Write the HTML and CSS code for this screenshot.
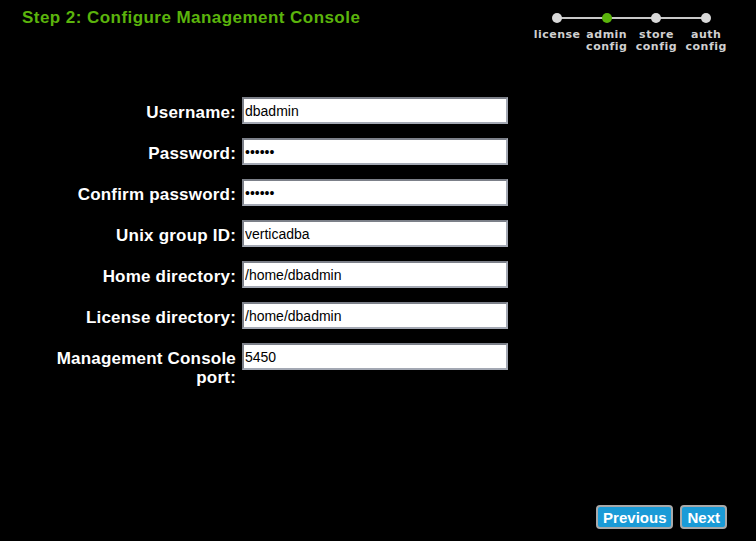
FILE: index.html
```
<html>
<head>
    <link rel="stylesheet" href="styles.css">
</head>
<body>
    <div class="page">
        <div class="top">
            <h1 class="title">Step 2: Configure Management Console</h1>
            <div class="steps">
                <div class="step">
                    <span class="dot"></span>
                    <span class="step-name">license</span>
                </div>
                <div class="step">
                    <span class="dot on"></span>
                    <span class="step-name">admin<br>config</span>
                </div>
                <div class="step">
                    <span class="dot"></span>
                    <span class="step-name">store<br>config</span>
                </div>
                <div class="step">
                    <span class="dot"></span>
                    <span class="step-name">auth<br>config</span>
                </div>
            </div>
        </div>

        <form class="fields" autocomplete="off" onsubmit="event.preventDefault();">
            <label for="user">Username:</label>
            <input type="text" id="user" value="dbadmin">

            <label for="pw">Password:</label>
            <input type="password" id="pw" value="secret">

            <label for="pw2">Confirm password:</label>
            <input type="password" id="pw2" value="secret">

            <label for="grp">Unix group ID:</label>
            <input type="text" id="grp" value="verticadba">

            <label for="home">Home directory:</label>
            <input type="text" id="home" value="/home/dbadmin">

            <label for="lic">License directory:</label>
            <input type="text" id="lic" value="/home/dbadmin">

            <label for="port">Management Console port:</label>
            <input type="text" id="port" value="5450">
        </form>

        <div class="nav">
            <button class="btn">Previous</button>
            <button class="btn">Next</button>
        </div>
    </div>
</body>
</html>
```

FILE: styles.css
```
body{
    margin: 0;
    padding: 0;
    background: #000;
    font-family: "Liberation Sans", Arial, sans-serif;
}
.page{
    display: flex;
    flex-direction: column;
    min-height: 100vh;
}
.top{
    display: flex;
    justify-content: space-between;
    align-items: flex-start;
    padding: 0 25px 0 22px;
}
.title{
    margin: 8px 0 0 0;
    font-size: 17px;
    font-weight: bold;
    letter-spacing: 0.45px;
    color: #5bb40c;
}
.steps{
    display: flex;
    position: relative;
    padding-top: 13px;
}
.steps::before{
    content: "";
    position: absolute;
    left: 25px;
    right: 25px;
    top: 17px;
    height: 2px;
    background: #c8c8c8;
}
.step{
    width: 49.7px;
    display: flex;
    flex-direction: column;
    align-items: center;
}
.dot{
    position: relative;
    width: 10px;
    height: 10px;
    border-radius: 50%;
    background: #d9d9d9;
}
.dot.on{
    background: #5bb40c;
}
.step-name{
    margin-top: 6px;
    font-family: "DejaVu Sans", sans-serif;
    font-size: 11px;
    font-weight: bold;
    line-height: 12px;
    letter-spacing: 0.5px;
    color: #d0d0d0;
    text-align: center;
    white-space: nowrap;
}
.fields{
    display: grid;
    grid-template-columns: 190px 266px;
    column-gap: 6px;
    row-gap: 14px;
    margin: 44px 0 0 0;
    padding-left: 46px;
}
.fields label{
    padding-top: 6px;
    font-size: 17px;
    font-weight: bold;
    line-height: 19px;
    letter-spacing: 0.2px;
    color: #fff;
    text-align: right;
}
.fields input{
    box-sizing: border-box;
    width: 266px;
    height: 27px;
    margin: 0;
    padding: 0 2px 0 1px;
    border: 2px solid;
    border-color: #7c8089 #a3a8b3 #a3a8b3 #7c8089;
    background: #fff;
    font-family: "Liberation Sans", Arial, sans-serif;
    font-size: 14px;
    color: #000;
    outline: none;
}
.nav{
    margin-top: auto;
    display: flex;
    justify-content: flex-end;
    gap: 7px;
    padding: 0 29px 12px 0;
}
.btn{
    height: 24px;
    padding: 0 5px;
    border: 2px solid #a9a9a9;
    border-radius: 4px;
    background: #1a9bd7;
    color: #fff;
    font-family: "Liberation Sans", Arial, sans-serif;
    font-size: 15px;
    font-weight: bold;
}
```
